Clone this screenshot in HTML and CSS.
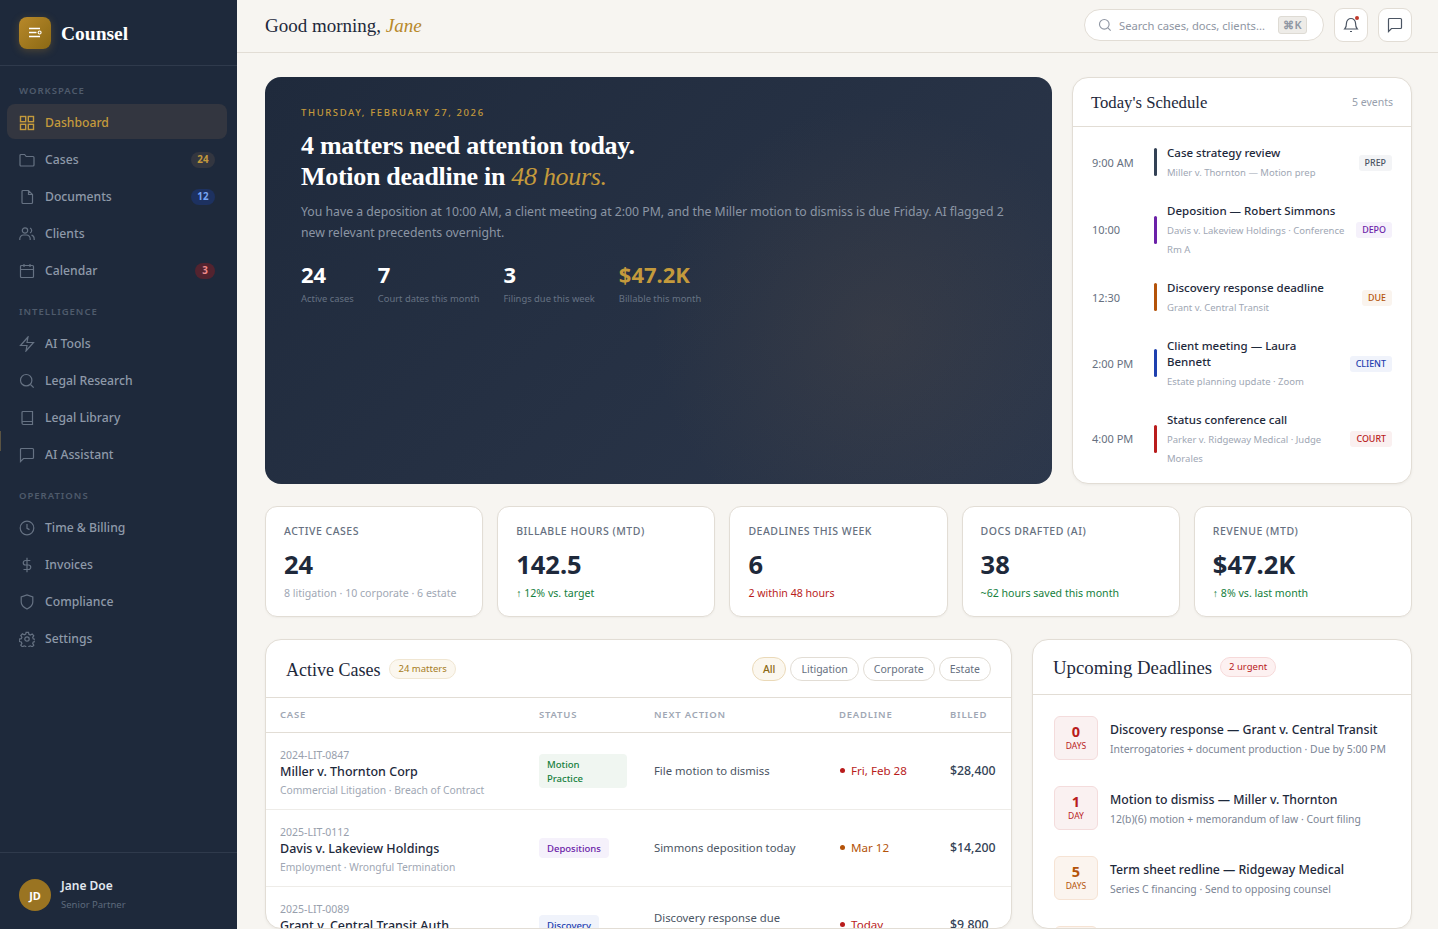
FILE: index.html
```html
<!DOCTYPE html>
<html lang="en">
<head>
  <meta charset="UTF-8" />
  <meta name="viewport" content="width=device-width, initial-scale=1.0" />
  <title>Counsel | Dashboard</title>
  <link rel="stylesheet" href="styles.css">
</head>
<body>

  <div class="app">

    <!-- SIDEBAR -->
    <aside class="sidebar">
      <div class="edge-mark"></div>
      <div class="brand">
        <div class="brand-logo">
          <svg viewBox="0 0 16 16" width="16" height="16" fill="none" stroke="#fff" stroke-width="1.5"><path d="M2 3.5h11M2 7.5h7.5M2 11.5h11"/><circle cx="12.6" cy="7.5" r="1.5" stroke-width="1.1"/></svg>
        </div>
        <span class="brand-name">Counsel</span>
      </div>

      <nav class="nav">
        <div class="nav-label">Workspace</div>
        <a class="nav-item active">
          <svg class="nav-icon" viewBox="0 0 16 16"><rect x="1.5" y="1.5" width="5.2" height="5.2"/><rect x="9.3" y="1.5" width="5.2" height="5.2"/><rect x="1.5" y="9.3" width="5.2" height="5.2"/><rect x="9.3" y="9.3" width="5.2" height="5.2"/></svg>
          Dashboard
        </a>
        <a class="nav-item">
          <svg class="nav-icon" viewBox="0 0 16 16"><path d="M1 3.5a1 1 0 0 1 1-1h3.6l1.6 2H14a1 1 0 0 1 1 1V13a1 1 0 0 1-1 1H2a1 1 0 0 1-1-1z"/></svg>
          Cases <span class="nav-badge gold">24</span>
        </a>
        <a class="nav-item">
          <svg class="nav-icon" viewBox="0 0 16 16"><path d="M9.5 1.5H4a1 1 0 0 0-1 1v11a1 1 0 0 0 1 1h8.5a1 1 0 0 0 1-1V5.5zM9.5 1.5v4h4"/></svg>
          Documents <span class="nav-badge blue">12</span>
        </a>
        <a class="nav-item">
          <svg class="nav-icon" viewBox="0 0 16 16"><circle cx="6" cy="4.5" r="2.7"/><path d="M.8 14v-1.3A3.7 3.7 0 0 1 4.5 9h3a3.7 3.7 0 0 1 3.7 3.7V14M11 2a2.7 2.7 0 0 1 0 5M12.5 9.2a3.7 3.7 0 0 1 2.7 3.5V14"/></svg>
          Clients
        </a>
        <a class="nav-item">
          <svg class="nav-icon" viewBox="0 0 16 16"><rect x="1.5" y="2.5" width="13" height="12" rx="1"/><path d="M1.5 6.5h13M5 1v3M11 1v3"/></svg>
          Calendar <span class="nav-badge red">3</span>
        </a>

        <div class="nav-label">Intelligence</div>
        <a class="nav-item">
          <svg class="nav-icon" viewBox="0 0 16 16"><path d="M9 1 1.5 9.5H8L7 15l7.5-8.5H8z"/></svg>
          AI Tools
        </a>
        <a class="nav-item">
          <svg class="nav-icon" viewBox="0 0 16 16"><circle cx="7.2" cy="7.2" r="5.7"/><path d="m11.5 11.5 3.2 3.2"/></svg>
          Legal Research
        </a>
        <a class="nav-item">
          <svg class="nav-icon" viewBox="0 0 16 16"><path d="M3 13V2.5a1 1 0 0 1 1-1h9.5v13h-9A1.5 1.5 0 0 1 3 13a1.5 1.5 0 0 1 1.5-1.5h9"/></svg>
          Legal Library
        </a>
        <a class="nav-item">
          <svg class="nav-icon" viewBox="0 0 16 16"><path d="M14.5 10.5a1 1 0 0 1-1 1H4.5L1.5 14.5v-12a1 1 0 0 1 1-1h11a1 1 0 0 1 1 1z"/></svg>
          AI Assistant
        </a>

        <div class="nav-label">Operations</div>
        <a class="nav-item">
          <svg class="nav-icon" viewBox="0 0 16 16"><circle cx="8" cy="8" r="6.8"/><path d="M8 4v4.3l2.5 1.3"/></svg>
          Time &amp; Billing
        </a>
        <a class="nav-item">
          <svg class="nav-icon" viewBox="0 0 16 16"><path d="M8 .8v14.4M11.3 3.5H6.500a2.200 2.200 0 0 0 0 4.500h3a2.200 2.200 0 0 1 0 4.500H4.500"/></svg>
          Invoices
        </a>
        <a class="nav-item">
          <svg class="nav-icon" viewBox="0 0 16 16"><path d="M8 15s5.800-2.700 5.800-7V3L8 1 2.200 3v5c0 4.300 5.800 7 5.800 7z"/></svg>
          Compliance
        </a>
        <a class="nav-item">
          <svg class="nav-icon" viewBox="0 0 16 16"><circle cx="8" cy="8" r="2.2"/><path d="M6.800 1h2.400l.4 2 1.500.7 1.800-1 1.600 1.700-1.100 1.700.6 1.500 2 .4v2.200l-2 .5-.6 1.400 1.100 1.800-1.600 1.600-1.800-1-1.500.6-.4 2H6.800l-.4-2-1.500-.6-1.800 1-1.600-1.600 1.100-1.800-.6-1.400-2-.5V7.800l2-.4.600-1.500-1.100-1.700 1.600-1.700 1.800 1 1.500-.7z" transform="translate(.3 .3)"/></svg>
          Settings
        </a>
      </nav>

      <div class="user">
        <div class="avatar">JD</div>
        <div>
          <div class="user-name">Jane Doe</div>
          <div class="user-role">Senior Partner</div>
        </div>
      </div>
    </aside>

    <!-- MAIN -->
    <div class="main">
      <header class="topbar">
        <div class="greeting">Good morning, <em>Jane</em></div>
        <div class="search">
          <svg viewBox="0 0 16 16" width="14" height="14" fill="none" stroke="#8f96a3" stroke-width="1.3"><circle cx="7.2" cy="7.2" r="5.5"/><path d="m11.3 11.3 3.2 3.2"/></svg>
          <span class="search-text">Search cases, docs, clients...</span>
          <span class="kbd">⌘K</span>
        </div>
        <button class="icon-btn">
          <svg viewBox="0 0 16 16" width="16" height="16" fill="none" stroke="#4b5563" stroke-width="1.2"><path d="M8 1.500A4.500 4.500 0 0 0 3.500 6c0 4-1.800 6-1.800 6h12.600s-1.800-2-1.800-6A4.500 4.500 0 0 0 8 1.500zM7 14.500h2"/></svg>
          <span class="dot"></span>
        </button>
        <button class="icon-btn">
          <svg viewBox="0 0 16 16" width="16" height="16" fill="none" stroke="#4b5563" stroke-width="1.2"><path d="M14.5 10.5a1 1 0 0 1-1 1H4.5L1.5 14.5v-12a1 1 0 0 1 1-1h11a1 1 0 0 1 1 1z"/></svg>
        </button>
      </header>

      <div class="content">

        <div class="row-top">
          <section class="hero">
            <div class="hero-date">Thursday, February 27, 2026</div>
            <h1>4 matters need attention today.<br>Motion deadline in <em>48 hours.</em></h1>
            <p>You have a deposition at 10:00 AM, a client meeting at 2:00 PM, and the Miller motion to dismiss is due Friday. AI flagged 2 new relevant precedents overnight.</p>
            <div class="hero-stats">
              <div><div class="hero-num">24</div><div class="hero-cap">Active cases</div></div>
              <div><div class="hero-num">7</div><div class="hero-cap">Court dates this month</div></div>
              <div><div class="hero-num">3</div><div class="hero-cap">Filings due this week</div></div>
              <div><div class="hero-num gold">$47.2K</div><div class="hero-cap">Billable this month</div></div>
            </div>
          </section>

          <section class="card schedule">
            <div class="schedule-head">
              <h3>Today's Schedule</h3>
              <span class="muted-note">5 events</span>
            </div>
            <div class="schedule-list">
              <div class="sch-item">
                <div class="sch-time">9:00 AM</div>
                <div class="sch-bar navy"></div>
                <div class="sch-body"><div class="sch-title">Case strategy review</div><div class="sch-sub">Miller v. Thornton — Motion prep</div></div>
                <span class="sch-tag prep">PREP</span>
              </div>
              <div class="sch-item">
                <div class="sch-time">10:00</div>
                <div class="sch-bar purple"></div>
                <div class="sch-body"><div class="sch-title">Deposition — Robert Simmons</div><div class="sch-sub">Davis v. Lakeview Holdings · Conference Rm A</div></div>
                <span class="sch-tag depo">DEPO</span>
              </div>
              <div class="sch-item">
                <div class="sch-time">12:30</div>
                <div class="sch-bar orange"></div>
                <div class="sch-body"><div class="sch-title">Discovery response deadline</div><div class="sch-sub">Grant v. Central Transit</div></div>
                <span class="sch-tag due">DUE</span>
              </div>
              <div class="sch-item">
                <div class="sch-time">2:00 PM</div>
                <div class="sch-bar blue"></div>
                <div class="sch-body"><div class="sch-title">Client meeting — Laura Bennett</div><div class="sch-sub">Estate planning update · Zoom</div></div>
                <span class="sch-tag client">CLIENT</span>
              </div>
              <div class="sch-item">
                <div class="sch-time">4:00 PM</div>
                <div class="sch-bar red"></div>
                <div class="sch-body"><div class="sch-title">Status conference call</div><div class="sch-sub">Parker v. Ridgeway Medical · Judge Morales</div></div>
                <span class="sch-tag court">COURT</span>
              </div>
            </div>
          </section>
        </div>

        <div class="kpis">
          <div class="kpi"><div class="kpi-label">Active Cases</div><div class="kpi-value">24</div><div class="kpi-note">8 litigation · 10 corporate · 6 estate</div></div>
          <div class="kpi"><div class="kpi-label">Billable Hours (MTD)</div><div class="kpi-value">142.5</div><div class="kpi-note up">↑ 12% vs. target</div></div>
          <div class="kpi"><div class="kpi-label">Deadlines This Week</div><div class="kpi-value">6</div><div class="kpi-note down">2 within 48 hours</div></div>
          <div class="kpi"><div class="kpi-label">Docs Drafted (AI)</div><div class="kpi-value">38</div><div class="kpi-note up">~62 hours saved this month</div></div>
          <div class="kpi"><div class="kpi-label">Revenue (MTD)</div><div class="kpi-value">$47.2K</div><div class="kpi-note up">↑ 8% vs. last month</div></div>
        </div>

        <div class="row-bottom">
          <section class="card cases">
            <div class="cases-head">
              <h3>Active Cases</h3>
              <span class="pill gold">24 matters</span>
              <div class="filters">
                <span class="filter on">All</span>
                <span class="filter">Litigation</span>
                <span class="filter">Corporate</span>
                <span class="filter">Estate</span>
              </div>
            </div>
            <table class="case-table">
              <colgroup><col class="c1"><col class="c2"><col class="c3"><col class="c4"><col class="c5"></colgroup>
              <thead>
                <tr><th>Case</th><th>Status</th><th>Next Action</th><th>Deadline</th><th>Billed</th></tr>
              </thead>
              <tbody>
                <tr>
                  <td><div class="case-no">2024-LIT-0847</div><div class="case-name">Miller v. Thornton Corp</div><div class="case-type">Commercial Litigation · Breach of Contract</div></td>
                  <td><span class="status green">Motion<br>Practice</span></td>
                  <td class="action">File motion to dismiss</td>
                  <td class="when red"><i></i>Fri, Feb 28</td>
                  <td class="billed">$28,400</td>
                </tr>
                <tr>
                  <td><div class="case-no">2025-LIT-0112</div><div class="case-name">Davis v. Lakeview Holdings</div><div class="case-type">Employment · Wrongful Termination</div></td>
                  <td><span class="status purple">Depositions</span></td>
                  <td class="action">Simmons deposition today</td>
                  <td class="when orange"><i></i>Mar 12</td>
                  <td class="billed">$14,200</td>
                </tr>
                <tr>
                  <td><div class="case-no">2025-LIT-0089</div><div class="case-name">Grant v. Central Transit Auth.</div><div class="case-type">Personal Injury · Negligence</div></td>
                  <td><span class="status blue">Discovery</span></td>
                  <td class="action">Discovery response due today</td>
                  <td class="when red"><i></i>Today</td>
                  <td class="billed">$9,800</td>
                </tr>
              </tbody>
            </table>
          </section>

          <section class="card deadlines">
            <div class="deadlines-head">
              <h3>Upcoming Deadlines</h3>
              <span class="pill red">2 urgent</span>
            </div>
            <div class="deadline-list">
              <div class="deadline">
                <div class="days red"><b>0</b><span>DAYS</span></div>
                <div class="dl-body"><div class="dl-title">Discovery response — Grant v. Central Transit</div><div class="dl-sub">Interrogatories + document production · Due by 5:00 PM</div></div>
              </div>
              <div class="deadline">
                <div class="days red"><b>1</b><span>DAY</span></div>
                <div class="dl-body"><div class="dl-title">Motion to dismiss — Miller v. Thornton</div><div class="dl-sub">12(b)(6) motion + memorandum of law · Court filing</div></div>
              </div>
              <div class="deadline">
                <div class="days orange"><b>5</b><span>DAYS</span></div>
                <div class="dl-body"><div class="dl-title">Term sheet redline — Ridgeway Medical</div><div class="dl-sub">Series C financing · Send to opposing counsel</div></div>
              </div>
              <div class="deadline">
                <div class="days orange"><b>7</b><span>DAYS</span></div>
                <div class="dl-body"><div class="dl-title">Estate plan review — Bennett Trust</div><div class="dl-sub">Will and trust amendments · Client sign-off</div></div>
              </div>
            </div>
          </section>
        </div>

      </div>
    </div>
  </div>

</body>
</html>
```

FILE: styles.css
```css
* { box-sizing: border-box; }
html, body { height: 100%; }
body { margin: 0; overflow: hidden; background: #f7f5f1; color: #1e293b; font-family: "Noto Sans", "Open Sans", sans-serif; font-size: 13px; }
h1, h3 { margin: 0; font-weight: 400; font-family: "Liberation Serif", serif; }
.app { display: flex; height: 929px; overflow: hidden; }

/* sidebar */
.sidebar { position: relative; flex: 0 0 237px; display: flex; flex-direction: column; background: #1e293b; }
.edge-mark { position: absolute; left: 0; top: 431px; width: 1px; height: 20px; background: #5a5342; }
.brand { display: flex; align-items: center; gap: 10px; height: 66px; padding: 0 19px; border-bottom: 1px solid #2f3a4c; }
.brand-logo { width: 32px; height: 32px; border-radius: 8px; display: flex; align-items: center; justify-content: center; background: linear-gradient(135deg, #b8892a, #8b6914); box-shadow: 0 2px 8px rgba(184,137,42,.3); }
.brand-name { margin-top: 2px; font-family: "Liberation Serif", serif; font-weight: 700; font-size: 19.5px; color: #fff; }
.nav { flex: 1; padding: 2px 10px 0 7px; }
.nav-label { padding: 16px 12px 7px; font-size: 9.5px; font-weight: 600; letter-spacing: 1px; text-transform: uppercase; line-height: 13px; color: #4f5b6c; }
.nav-item { display: flex; align-items: center; gap: 10px; height: 35px; margin-bottom: 2px; padding: 2px 12px 0; border-radius: 8px; font-size: 12.2px; font-weight: 500; color: #8e99a9; }
.nav-item.active { background: #333640; color: #c49a3c; }
.nav-icon { flex: 0 0 16px; width: 16px; height: 16px; fill: none; stroke: #667283; stroke-width: 1.2; }
.nav-item.active .nav-icon { stroke: #c49a3c; stroke-width: 1.4; }
.nav-badge { margin-left: auto; min-width: 20px; padding: 0 6.5px; border-radius: 8px; font-size: 9.8px; font-weight: 700; line-height: 16px; text-align: center; }
.nav-badge.gold { background: #333640; color: #c49a3c; }
.nav-badge.blue { background: #1d3160; color: #76a5f5; }
.nav-badge.red { background: #53232f; color: #f08a8a; }
.user { display: flex; align-items: center; gap: 10px; height: 77px; padding: 8px 19px 0; border-top: 1px solid #2f3a4c; }
.avatar { width: 32px; height: 32px; border-radius: 50%; display: flex; align-items: center; justify-content: center; background: #9a7422; color: #fff; font-size: 11px; font-weight: 700; }
.user-name { font-size: 12px; font-weight: 600; line-height: 19px; color: #e2e8f0; }
.user-role { font-size: 9.5px; line-height: 19px; color: #5d6a7c; }

/* topbar */
.main { flex: 1; min-width: 0; display: flex; flex-direction: column; }
.topbar { flex: 0 0 53px; display: flex; align-items: center; padding: 0 26px 2px 28px; border-bottom: 1px solid #e2ddd5; }
.greeting { flex: 1; margin-top: 2px; font-family: "Liberation Serif", serif; font-size: 19px; color: #1e293b; }
.greeting em { color: #b8892a; }
.search { display: flex; align-items: center; gap: 7px; width: 240px; height: 32px; margin-right: 10px; padding: 0 16px 0 13px; border: 1px solid #e2ddd5; border-radius: 16px; background: #fff; }
.search-text { flex: 1; font-size: 11.2px; color: #8f96a3; white-space: nowrap; }
.kbd { width: 29px; padding: 0; border: 1px solid #dedbd4; border-radius: 3px; background: #eeece8; font-size: 11px; font-weight: 600; line-height: 16px; text-align: center; color: #8f96a3; }
.icon-btn { position: relative; width: 34px; height: 34px; margin-left: 10px; padding: 0; display: flex; align-items: center; justify-content: center; border: 1px solid #e2ddd5; border-radius: 9px; background: #fff; }
.search + .icon-btn { margin-left: 0; }
.dot { position: absolute; top: 7px; right: 8px; width: 4px; height: 4px; border-radius: 50%; background: #c0392b; }

/* content */
.content { flex: 1; min-height: 0; padding: 24px 26px 0 28px; display: flex; flex-direction: column; gap: 22px; }
.row-top { display: flex; gap: 20px; height: 407px; flex: 0 0 407px; }
.card { background: #fff; border: 1px solid #e2ddd5; border-radius: 16px; box-shadow: 0 1px 3px rgba(0,0,0,.05); }

.hero { flex: 1; min-width: 0; padding: 28px 36px; border-radius: 16px; color: #fff; background: radial-gradient(circle at 78% 62%, rgba(120,95,70,.17), transparent 34%), linear-gradient(135deg, #1f2a3c, #2c374b); }
.hero-date { font-size: 9.5px; font-weight: 500; line-height: 16px; letter-spacing: 1.6px; text-transform: uppercase; color: #c49a3c; }
.hero h1 { margin-top: 9px; font-size: 26px; font-weight: 700; line-height: 31px; letter-spacing: -.3px; }
.hero h1 em { color: #c49a3c; font-weight: 400; }
.hero p { margin: 9px 0 0; font-size: 12.25px; line-height: 21px; color: #8b95a4; }
.hero-stats { display: flex; gap: 24px; margin-top: 16px; }
.hero-num { font-size: 22px; font-weight: 700; line-height: 30px; }
.hero-num.gold { color: #c49a3c; }
.hero-cap { margin-top: 3px; font-size: 9.4px; line-height: 14px; color: #667283; }

.schedule { flex: 0 0 340px; overflow: hidden; }
.schedule-head { display: flex; align-items: center; justify-content: space-between; height: 49px; padding: 0 18px; border-bottom: 1px solid #e2ddd5; }
.schedule-head h3 { margin-top: 2px; font-size: 16.7px; color: #1e293b; }
.muted-note { font-size: 10.5px; color: #98a0ad; }
.schedule-list { padding: 18px 19px 0; display: flex; flex-direction: column; gap: 21px; }
.sch-item { display: flex; align-items: center; gap: 10px; }
.sch-time { flex: 0 0 50px; margin: 0 2px 3px 0; font-size: 11px; color: #667080; }
.sch-bar { flex: 0 0 3px; height: 28px; margin-bottom: 3px; border-radius: 2px; }
.sch-bar.navy { background: #334155; }
.sch-bar.purple { background: #6b21a8; }
.sch-bar.orange { background: #b45309; }
.sch-bar.blue { background: #1e40af; }
.sch-bar.red { background: #b91c1c; }
.sch-body { flex: 1; min-width: 0; }
.sch-title { font-size: 11.5px; font-weight: 500; line-height: 16px; color: #1e293b; }
.sch-sub { margin-top: 2px; font-size: 9.5px; line-height: 19px; color: #a0a7b4; }
.sch-tag { margin-bottom: 2px; padding: 0 6px; border-radius: 3px; font-size: 8.9px; font-weight: 500; line-height: 16px; }
.sch-tag.prep { background: #f3f4f6; color: #4b5563; }
.sch-tag.depo { background: #f5f1fb; color: #6b21a8; }
.sch-tag.due { background: #faf4ee; color: #b45309; }
.sch-tag.client { background: #f0f3fb; color: #1e40af; }
.sch-tag.court { background: #faf0f0; color: #b91c1c; }

.kpis { display: grid; grid-template-columns: repeat(5, 1fr); gap: 14px; flex: 0 0 111px; }
.kpi { padding: 16px 18px 15px; background: #fff; border: 1px solid #e2ddd5; border-radius: 12px; box-shadow: 0 1px 2px rgba(0,0,0,.04); }
.kpi-label { font-size: 10.5px; font-weight: 500; line-height: 16px; letter-spacing: .5px; text-transform: uppercase; color: #667080; }
.kpi-value { margin-top: 10px; font-size: 25.5px; font-weight: 700; line-height: 30px; color: #1e293b; }
.kpi-note { margin-top: 6px; font-size: 10.6px; line-height: 16px; color: #a0a7b4; }
.kpi-note.up { color: #15803d; }
.kpi-note.down { color: #b91c1c; }

.row-bottom { display: flex; gap: 20px; flex: 1; min-height: 0; }
.cases { flex: 0 0 747px; overflow: hidden; }
.deadlines { flex: 1; overflow: hidden; }
.cases-head { display: flex; align-items: center; gap: 9px; height: 58px; padding: 0 20px; border-bottom: 1px solid #e2ddd5; }
.cases-head h3 { margin-top: 3px; font-size: 18px; color: #1e293b; }
.deadlines-head h3 { margin-top: 1px; font-size: 18.8px; color: #1e293b; }
.pill { padding: 0 8px; border-radius: 10px; font-size: 9.5px; line-height: 18px; }
.pill.gold { background: #fbf7ef; border: 1px solid #f0e6d2; color: #a67c22; }
.pill.red { background: #fdf1f1; border: 1px solid #f6d9d9; color: #b91c1c; }
.filters { margin-left: auto; display: flex; gap: 4px; }
.filter { padding: 0 10px; border: 1px solid #e2ddd5; border-radius: 12px; font-size: 10.5px; line-height: 22px; color: #667080; }
.filter.on { background: #fbf7ef; border-color: #ead9b8; color: #8b6914; font-weight: 500; }

.case-table { width: 100%; border-collapse: collapse; table-layout: fixed; }
.c1 { width: 259px; }
.c2 { width: 115px; }
.c3 { width: 185px; }
.c4 { width: 111px; }
.c5 { width: 75px; }
.case-table th { height: 34px; padding: 0 14px; border-bottom: 1px solid #e2ddd5; text-align: left; font-size: 9.5px; font-weight: 600; letter-spacing: .8px; text-transform: uppercase; color: #a0a7b4; }
.case-table td { height: 77px; padding: 0 14px; border-bottom: 1px solid #eeece8; vertical-align: middle; }
.case-table td:first-child { padding-top: 6px; }
.case-no { font-size: 10.5px; line-height: 15px; color: #98a0ad; }
.case-name { font-size: 12.5px; font-weight: 500; line-height: 18px; color: #1e293b; }
.case-type { font-size: 10.3px; line-height: 19px; color: #a0a7b4; }
.status { display: inline-block; padding: 4px 8px 2px; border-radius: 4px; font-size: 9.5px; font-weight: 500; line-height: 14px; }
.status.green { width: 88px; background: #f0f6f1; color: #15803d; }
.status.purple { background: #f5f1fb; color: #6b21a8; }
.status.blue { background: #f0f3fb; color: #1e40af; }
.action { font-size: 11.3px; color: #4b5563; }
.when { font-size: 11.6px; white-space: nowrap; }
.when i { display: inline-block; width: 5px; height: 5px; margin: 0 6px 2px 1px; border-radius: 50%; background: currentColor; }
.when.red { color: #b91c1c; }
.when.orange { color: #b45309; }
.billed { font-size: 12.3px; font-weight: 500; color: #334155; white-space: nowrap; }

.deadlines-head { display: flex; align-items: center; gap: 8px; height: 55px; padding: 0 20px; border-bottom: 1px solid #e2ddd5; }
.deadline-list { padding: 21px 21px 0; display: flex; flex-direction: column; gap: 26px; }
.deadline { display: flex; align-items: center; gap: 12px; }
.dl-body { padding-top: 3px; }
.days { flex: 0 0 44px; height: 44px; border-radius: 6px; display: flex; flex-direction: column; align-items: center; justify-content: center; border: 1px solid; }
.days b { font-size: 14.5px; line-height: 15px; }
.days span { font-size: 8.5px; line-height: 13px; }
.days.red { background: #faf1f1; border-color: #f4dcdc; color: #b91c1c; }
.days.orange { background: #fbf4ee; border-color: #f6e3d4; color: #b45309; }
.dl-title { font-size: 12.3px; font-weight: 500; line-height: 18px; color: #1e293b; }
.dl-sub { margin-top: 1px; font-size: 10.4px; line-height: 18px; color: #7b8494; }
```
